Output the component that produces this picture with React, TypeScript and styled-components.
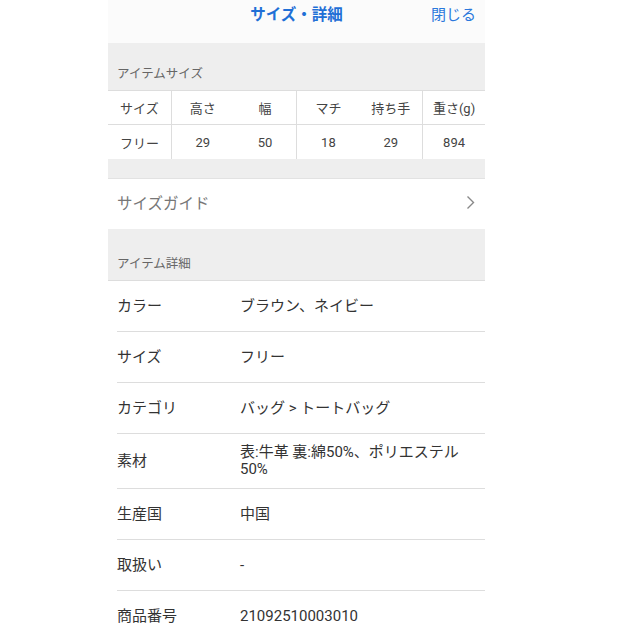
import * as React from 'react';
import styled, { createGlobalStyle } from 'styled-components';

const GlobalStyle = createGlobalStyle`
  html, body {
    margin: 0;
    padding: 0;
    background: #ffffff;
  }
  body {
    font-family: Roboto, 'Noto Sans CJK JP', sans-serif;
    color: #333333;
  }
`;

const Panel = styled.div`
  width: 377px;
  margin-left: 108px;
  background: #ffffff;
`;

const Header = styled.header`
  position: relative;
  height: 43px;
  box-sizing: border-box;
  padding-top: 5px;
  background: #fbfbfb;
  display: flex;
  justify-content: center;
`;

const Title = styled.h1`
  margin: 0;
  font-size: 15.5px;
  line-height: 20px;
  font-weight: 700;
  color: #1f6fd6;
`;

const CloseButton = styled.button`
  position: absolute;
  right: 9px;
  top: 5px;
  padding: 0;
  border: 0;
  background: none;
  font-family: inherit;
  font-size: 15px;
  line-height: 20px;
  color: #2a78dc;
`;

const SectionHead = styled.div<{ $height: number }>`
  height: ${({ $height }) => $height}px;
  box-sizing: border-box;
  background: #eeeeee;
  border-bottom: 1px solid #dddddd;
  padding: 0 9px 7px;
  display: flex;
  align-items: flex-end;
  font-size: 12.5px;
  line-height: 18px;
  color: #666666;
`;

const SizeTable = styled.div`
  display: grid;
  grid-template-columns: repeat(6, 1fr);
`;

const Cell = styled.div<{ $divider?: boolean; $top?: boolean }>`
  height: 34px;
  box-sizing: border-box;
  display: flex;
  align-items: center;
  justify-content: center;
  font-size: 13px;
  color: #444444;
  border-left: ${({ $divider }) => ($divider ? '1px solid #dddddd' : '0')};
  border-bottom: ${({ $top }) => ($top ? '1px solid #dddddd' : '0')};
`;

const Spacer = styled.div`
  height: 19px;
  background: #eeeeee;
  border-bottom: 1px solid #e2e2e2;
`;

const GuideRow = styled.div`
  height: 50px;
  box-sizing: border-box;
  display: flex;
  align-items: center;
  justify-content: space-between;
  padding: 0 10px 4px 9px;
  font-size: 15.5px;
  color: #777777;
`;

const DetailList = styled.dl`
  margin: 0;
  padding-left: 9px;
`;

const DetailRow = styled.div<{ $last?: boolean }>`
  min-height: 30px;
  padding: 10px 0;
  display: flex;
  align-items: center;
  border-bottom: ${({ $last }) => ($last ? '0' : '1px solid #dddddd')};
  font-size: 15px;
  line-height: 17px;
  color: #333333;
`;

const Label = styled.dt`
  width: 123px;
  flex-shrink: 0;
`;

const Value = styled.dd`
  margin: 0;
  padding-right: 14px;
`;

const sizeHead = ['サイズ', '高さ', '幅', 'マチ', '持ち手', '重さ(g)'];
const sizeRow = ['フリー', '29', '50', '18', '29', '894'];

const details: [string, string][] = [
  ['カラー', 'ブラウン、ネイビー'],
  ['サイズ', 'フリー'],
  ['カテゴリ', 'バッグ > トートバッグ'],
  ['素材', '表:牛革 裏:綿50%、ポリエステル50%'],
  ['生産国', '中国'],
  ['取扱い', '-'],
  ['商品番号', '21092510003010'],
];

const Chevron = () => (
  <svg width="9" height="15" viewBox="0 0 9 15" fill="none">
    <polyline points="1.5,1.5 7.5,7.5 1.5,13.5" stroke="#888888" strokeWidth="1.4" />
  </svg>
);

export default function App() {
  return (
    <>
      <GlobalStyle />
      <Panel>
        <Header>
          <Title>サイズ・詳細</Title>
          <CloseButton>閉じる</CloseButton>
        </Header>
        <SectionHead $height={48}>アイテムサイズ</SectionHead>
        <SizeTable>
          {sizeHead.map((t, i) => (
            <Cell key={`h${i}`} $top $divider={i % 2 === 1}>{t}</Cell>
          ))}
          {sizeRow.map((t, i) => (
            <Cell key={`r${i}`} $divider={i % 2 === 1}>{t}</Cell>
          ))}
        </SizeTable>
        <Spacer />
        <GuideRow>
          <span>サイズガイド</span>
          <Chevron />
        </GuideRow>
        <SectionHead $height={52}>アイテム詳細</SectionHead>
        <DetailList>
          {details.map(([k, v], i) => (
            <DetailRow key={k} $last={i === details.length - 1}>
              <Label>{k}</Label>
              <Value>{v}</Value>
            </DetailRow>
          ))}
        </DetailList>
      </Panel>
    </>
  );
}
